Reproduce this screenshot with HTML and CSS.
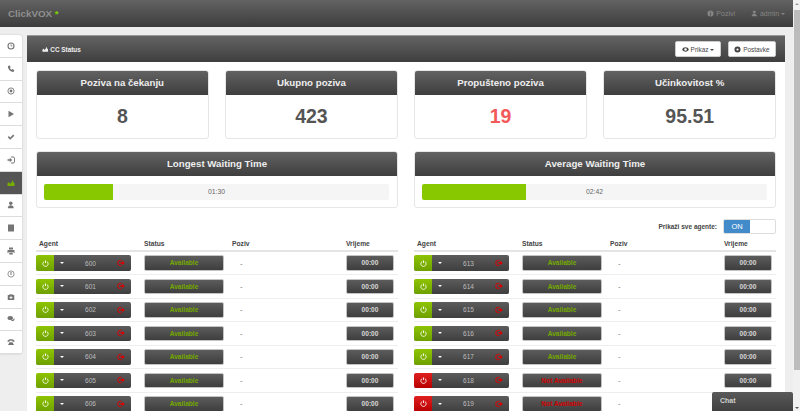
FILE: index.html
```html
<!DOCTYPE html>
<html>

<head>
    <title>ClickVOX - CC Status</title>
    <link rel="stylesheet" href="styles.css">
</head>

<body>
    <svg class="icon-defs" width="0" height="0">
        <symbol id="i-clock" viewBox="0 0 16 16"><circle cx="8" cy="8" r="6" fill="none" stroke="currentColor" stroke-width="2.2"/><path d="M8 4.500V8h3" fill="none" stroke="currentColor" stroke-width="1.500"/></symbol>
        <symbol id="i-phone" viewBox="0 0 16 16"><path d="M3 1.500l2.500-.5 2 3.500-1.800 1.500c.7 1.700 2 3 3.600 3.700l1.500-1.700 3.700 2-.5 2.500c-.3 1-1.500 1.500-2.500 1.300C6 12.800 2.700 8.800 1.800 4c-.2-1 .2-2.100 1.200-2.500z" fill="currentColor"/></symbol>
        <symbol id="i-target" viewBox="0 0 16 16"><circle cx="8" cy="8" r="6.200" fill="none" stroke="currentColor" stroke-width="1.800"/><circle cx="8" cy="8" r="2.800" fill="currentColor"/></symbol>
        <symbol id="i-play" viewBox="0 0 16 16"><path d="M3 1.500L14 8 3 14.500z" fill="currentColor"/></symbol>
        <symbol id="i-check" viewBox="0 0 16 16"><path d="M1.500 8.500l2.300-2.300 2.700 2.700 5.800-5.800 2.300 2.300-8.100 8.100z" fill="currentColor"/></symbol>
        <symbol id="i-login" viewBox="0 0 16 16"><path d="M8 2h4.500A2.500 2.500 0 0 1 15 4.500v7a2.500 2.500 0 0 1-2.500 2.500H8" fill="none" stroke="currentColor" stroke-width="2"/><path d="M1 6.500h4.500V3.500L10.500 8l-5 4.500v-3H1z" fill="currentColor"/></symbol>
        <symbol id="i-chart" viewBox="0 0 16 16"><path d="M1 14V9l3-3 2 4 3-3 2-5 2 5 2 1v6z" fill="currentColor"/></symbol>
        <symbol id="i-user" viewBox="0 0 16 16"><circle cx="7.500" cy="4.500" r="3.500" fill="currentColor"/><path d="M1.500 14.500c0-4 2.500-6 6-6s6 2 6 6z" fill="currentColor"/></symbol>
        <symbol id="i-book" viewBox="0 0 16 16"><path d="M2 1h12v14H2z" fill="currentColor"/></symbol>
        <symbol id="i-print" viewBox="0 0 16 16"><path d="M4 1h8v4H4zM1 6h14v6h-2V10H3v2H1zM4.500 11h7v4h-7z" fill="currentColor"/></symbol>
        <symbol id="i-gauge" viewBox="0 0 16 16"><circle cx="8" cy="8" r="6.200" fill="none" stroke="currentColor" stroke-width="1.500"/><path d="M7 4h2v6H7z" fill="currentColor"/></symbol>
        <symbol id="i-medkit" viewBox="0 0 16 16"><path d="M5 4V2h6v2h3.500v10h-13V4zm1.500 0h3V3h-3zM7 6.500V8.500H5v1.500h2v2h2v-2h2V8.500H9v-2z" fill="currentColor" fill-rule="evenodd"/></symbol>
        <symbol id="i-comments" viewBox="0 0 16 16"><ellipse cx="6.500" cy="6" rx="5.500" ry="4.200" fill="currentColor"/><path d="M10 12c3 .5 5-1 5-3.500 0-1-.5-1.800-1-2.300C13.500 9 11 10.500 7.500 11z" fill="currentColor"/></symbol>
        <symbol id="i-desk" viewBox="0 0 16 16"><path d="M1 6c1-5 13-5 14 0v1.500h-4V5.500H5v2H1zM5 8.500h6l3 5.500H2z" fill="currentColor"/></symbol>
        <symbol id="i-info" viewBox="0 0 16 16"><path d="M8 1a7 7 0 1 0 0 14A7 7 0 0 0 8 1zM7 3.500h2v2H7zM7 7h2v5.500H7z" fill="currentColor" fill-rule="evenodd"/></symbol>
        <symbol id="i-eye" viewBox="0 0 16 16"><path d="M8 3c3.500 0 6.500 2 7.500 5-1 3-4 5-7.500 5S1.500 11 .5 8C1.500 5 4.500 3 8 3zm0 2a3 3 0 1 0 0 6 3 3 0 0 0 0-6z" fill="currentColor" fill-rule="evenodd"/></symbol>
        <symbol id="i-gear" viewBox="0 0 16 16"><path d="M8 1a7 7 0 1 0 0 14A7 7 0 0 0 8 1zm0 4.500a2.500 2.500 0 1 1 0 5 2.500 2.500 0 0 1 0-5z" fill="currentColor" fill-rule="evenodd"/></symbol>
        <symbol id="i-power" viewBox="0 0 16 16"><path d="M5 3.400a6 6 0 1 0 6 0" fill="none" stroke="currentColor" stroke-width="2"/><path d="M8 1v6" stroke="currentColor" stroke-width="2"/></symbol>
        <symbol id="i-logout" viewBox="0 0 16 16"><path d="M9 2.500H7a5.500 5.500 0 0 0 0 11h2" fill="none" stroke="currentColor" stroke-width="2"/><path d="M6.500 6.500h4V3.500L15.500 8l-5 4.500v-3h-4z" fill="currentColor"/></symbol>
    </svg>

    <div class="viewport">
        <div class="page">
            <div class="topbar">
                <div class="logo">ClickVOX <span class="logo-star">*</span></div>
                <div class="topbar-right">
                    <span class="top-link"><svg class="ico"><use href="#i-info"/></svg> Pozivi</span>
                    <span class="top-link"><svg class="ico"><use href="#i-user"/></svg> admin <i class="caret"></i></span>
                </div>
            </div>

            <div class="layout">
                <div class="sidebar">
                    <div class="side-item"><svg class="ico"><use href="#i-clock"/></svg></div>
                    <div class="side-item"><svg class="ico"><use href="#i-phone"/></svg></div>
                    <div class="side-item"><svg class="ico"><use href="#i-target"/></svg></div>
                    <div class="side-item"><svg class="ico"><use href="#i-play"/></svg></div>
                    <div class="side-item"><svg class="ico"><use href="#i-check"/></svg></div>
                    <div class="side-item"><svg class="ico"><use href="#i-login"/></svg></div>
                    <div class="side-item active"><svg class="ico"><use href="#i-chart"/></svg></div>
                    <div class="side-item"><svg class="ico"><use href="#i-user"/></svg></div>
                    <div class="side-item"><svg class="ico"><use href="#i-book"/></svg></div>
                    <div class="side-item"><svg class="ico"><use href="#i-print"/></svg></div>
                    <div class="side-item"><svg class="ico"><use href="#i-gauge"/></svg></div>
                    <div class="side-item"><svg class="ico"><use href="#i-medkit"/></svg></div>
                    <div class="side-item"><svg class="ico"><use href="#i-comments"/></svg></div>
                    <div class="side-item"><svg class="ico"><use href="#i-desk"/></svg></div>
                </div>

                <div class="main">
                    <div class="main-head">
                        <div class="main-title"><svg class="ico"><use href="#i-chart"/></svg> CC Status</div>
                        <div class="main-actions">
                            <button class="white-btn btn-prikaz"><svg class="ico"><use href="#i-eye"/></svg> Prikaz <i class="caret"></i></button>
                            <button class="white-btn btn-postavke"><svg class="ico"><use href="#i-gear"/></svg> Postavke</button>
                        </div>
                    </div>

                    <div class="content">
                        <div class="stat-grid">
                            <div class="stat-card">
                                <div class="card-head">Poziva na čekanju</div>
                                <div class="stat-value">8</div>
                            </div>
                            <div class="stat-card">
                                <div class="card-head">Ukupno poziva</div>
                                <div class="stat-value">423</div>
                            </div>
                            <div class="stat-card">
                                <div class="card-head">Propušteno poziva</div>
                                <div class="stat-value missed">19</div>
                            </div>
                            <div class="stat-card">
                                <div class="card-head">Učinkovitost %</div>
                                <div class="stat-value">95.51</div>
                            </div>
                        </div>

                        <div class="wait-grid">
                            <div class="stat-card">
                                <div class="card-head">Longest Waiting Time</div>
                                <div class="wait-body">
                                    <div class="progress">
                                        <div class="progress-fill" style="width: 20%"></div>
                                        <div class="progress-label">01:30</div>
                                    </div>
                                </div>
                            </div>
                            <div class="stat-card">
                                <div class="card-head">Average Waiting Time</div>
                                <div class="wait-body">
                                    <div class="progress">
                                        <div class="progress-fill" style="width: 30%"></div>
                                        <div class="progress-label">02:42</div>
                                    </div>
                                </div>
                            </div>
                        </div>

                        <div class="toggle-row">
                            <span class="toggle-label">Prikaži sve agente:</span>
                            <div class="toggle"><span class="toggle-on">ON</span><span class="toggle-off"></span></div>
                        </div>

                        <div class="agent-grid">
                            <table class="agents">
                                <tr><th class="col-agent">Agent</th><th class="col-status">Status</th><th class="col-call">Poziv</th><th class="col-time">Vrijeme</th></tr>
                                <tr><td><div class="agent-btn"><span class="agent-power"><svg class="ico"><use href="#i-power"/></svg></span><span class="agent-body"><i class="caret"></i><span class="agent-num">600</span><svg class="ico logout"><use href="#i-logout"/></svg></span></div></td><td><div class="dark-btn status-ok">Available</div></td><td class="dash">-</td><td><div class="dark-btn time">00:00</div></td></tr>
                                <tr><td><div class="agent-btn"><span class="agent-power"><svg class="ico"><use href="#i-power"/></svg></span><span class="agent-body"><i class="caret"></i><span class="agent-num">601</span><svg class="ico logout"><use href="#i-logout"/></svg></span></div></td><td><div class="dark-btn status-ok">Available</div></td><td class="dash">-</td><td><div class="dark-btn time">00:00</div></td></tr>
                                <tr><td><div class="agent-btn"><span class="agent-power"><svg class="ico"><use href="#i-power"/></svg></span><span class="agent-body"><i class="caret"></i><span class="agent-num">602</span><svg class="ico logout"><use href="#i-logout"/></svg></span></div></td><td><div class="dark-btn status-ok">Available</div></td><td class="dash">-</td><td><div class="dark-btn time">00:00</div></td></tr>
                                <tr><td><div class="agent-btn"><span class="agent-power"><svg class="ico"><use href="#i-power"/></svg></span><span class="agent-body"><i class="caret"></i><span class="agent-num">603</span><svg class="ico logout"><use href="#i-logout"/></svg></span></div></td><td><div class="dark-btn status-ok">Available</div></td><td class="dash">-</td><td><div class="dark-btn time">00:00</div></td></tr>
                                <tr><td><div class="agent-btn"><span class="agent-power"><svg class="ico"><use href="#i-power"/></svg></span><span class="agent-body"><i class="caret"></i><span class="agent-num">604</span><svg class="ico logout"><use href="#i-logout"/></svg></span></div></td><td><div class="dark-btn status-ok">Available</div></td><td class="dash">-</td><td><div class="dark-btn time">00:00</div></td></tr>
                                <tr><td><div class="agent-btn"><span class="agent-power"><svg class="ico"><use href="#i-power"/></svg></span><span class="agent-body"><i class="caret"></i><span class="agent-num">605</span><svg class="ico logout"><use href="#i-logout"/></svg></span></div></td><td><div class="dark-btn status-ok">Available</div></td><td class="dash">-</td><td><div class="dark-btn time">00:00</div></td></tr>
                                <tr><td><div class="agent-btn"><span class="agent-power"><svg class="ico"><use href="#i-power"/></svg></span><span class="agent-body"><i class="caret"></i><span class="agent-num">606</span><svg class="ico logout"><use href="#i-logout"/></svg></span></div></td><td><div class="dark-btn status-ok">Available</div></td><td class="dash">-</td><td><div class="dark-btn time">00:00</div></td></tr>
                            </table>
                            <table class="agents">
                                <tr><th class="col-agent">Agent</th><th class="col-status">Status</th><th class="col-call">Poziv</th><th class="col-time">Vrijeme</th></tr>
                                <tr><td><div class="agent-btn"><span class="agent-power"><svg class="ico"><use href="#i-power"/></svg></span><span class="agent-body"><i class="caret"></i><span class="agent-num">613</span><svg class="ico logout"><use href="#i-logout"/></svg></span></div></td><td><div class="dark-btn status-ok">Available</div></td><td class="dash">-</td><td><div class="dark-btn time">00:00</div></td></tr>
                                <tr><td><div class="agent-btn"><span class="agent-power"><svg class="ico"><use href="#i-power"/></svg></span><span class="agent-body"><i class="caret"></i><span class="agent-num">614</span><svg class="ico logout"><use href="#i-logout"/></svg></span></div></td><td><div class="dark-btn status-ok">Available</div></td><td class="dash">-</td><td><div class="dark-btn time">00:00</div></td></tr>
                                <tr><td><div class="agent-btn"><span class="agent-power"><svg class="ico"><use href="#i-power"/></svg></span><span class="agent-body"><i class="caret"></i><span class="agent-num">615</span><svg class="ico logout"><use href="#i-logout"/></svg></span></div></td><td><div class="dark-btn status-ok">Available</div></td><td class="dash">-</td><td><div class="dark-btn time">00:00</div></td></tr>
                                <tr><td><div class="agent-btn"><span class="agent-power"><svg class="ico"><use href="#i-power"/></svg></span><span class="agent-body"><i class="caret"></i><span class="agent-num">616</span><svg class="ico logout"><use href="#i-logout"/></svg></span></div></td><td><div class="dark-btn status-ok">Available</div></td><td class="dash">-</td><td><div class="dark-btn time">00:00</div></td></tr>
                                <tr><td><div class="agent-btn"><span class="agent-power"><svg class="ico"><use href="#i-power"/></svg></span><span class="agent-body"><i class="caret"></i><span class="agent-num">617</span><svg class="ico logout"><use href="#i-logout"/></svg></span></div></td><td><div class="dark-btn status-ok">Available</div></td><td class="dash">-</td><td><div class="dark-btn time">00:00</div></td></tr>
                                <tr><td><div class="agent-btn off"><span class="agent-power"><svg class="ico"><use href="#i-power"/></svg></span><span class="agent-body"><i class="caret"></i><span class="agent-num">618</span><svg class="ico logout"><use href="#i-logout"/></svg></span></div></td><td><div class="dark-btn status-no">Not Available</div></td><td class="dash">-</td><td><div class="dark-btn time">00:00</div></td></tr>
                                <tr><td><div class="agent-btn off"><span class="agent-power"><svg class="ico"><use href="#i-power"/></svg></span><span class="agent-body"><i class="caret"></i><span class="agent-num">619</span><svg class="ico logout"><use href="#i-logout"/></svg></span></div></td><td><div class="dark-btn status-no">Not Available</div></td><td class="dash">-</td><td><div class="dark-btn time">00:00</div></td></tr>
                            </table>
                        </div>
                    </div>
                </div>
            </div>

            <div class="chat-tab">Chat</div>
        </div>

        <div class="scrollbar">
            <div class="scroll-arrow up"></div>
            <div class="scroll-track"><div class="scroll-thumb"></div></div>
            <div class="scroll-arrow down"></div>
        </div>
    </div>
</body>

</html>
```

FILE: styles.css
```css
/* page frame */

html, body {
    margin: 0;
    padding: 0;
    height: 411px;
    overflow: hidden;
}

body {
    font-family: "Liberation Sans", Arial, sans-serif;
    font-size: 8px;
    color: #555555;
    background-color: #eeeeee;
}

.icon-defs {
    display: block;
    height: 0;
}

.viewport {
    display: flex;
    height: 411px;
}

.page {
    position: relative;
    width: 793px;
    height: 411px;
    overflow: hidden;
}

.ico {
    width: 7px;
    height: 7px;
    vertical-align: -1px;
}

.caret {
    display: inline-block;
    width: 0;
    height: 0;
    border-left: 2.5px solid transparent;
    border-right: 2.5px solid transparent;
    border-top: 2.5px solid currentColor;
    vertical-align: middle;
}

/* top bar */

.topbar {
    height: 27px;
    padding: 0 8px;
    display: flex;
    justify-content: space-between;
    align-items: center;
    background: linear-gradient(#636363, #3c3c3c);
}

.logo {
    font-size: 9.8px;
    font-weight: bold;
    color: #8f8f8f;
}

.logo-star {
    color: #7fd000;
}

.topbar-right {
    display: flex;
    gap: 16px;
    color: #858585;
    font-size: 7px;
}

/* sidebar and main */

.layout {
    display: flex;
    gap: 5px;
    padding-top: 8px;
}

.sidebar {
    width: 22px;
    height: 319px;
    flex-shrink: 0;
    background-color: #ffffff;
    border-radius: 0 3px 3px 0;
    box-shadow: 0 0 2px rgba(0, 0, 0, 0.2);
}

.side-item {
    height: 22.8px;
    box-sizing: border-box;
    display: flex;
    align-items: center;
    justify-content: center;
    border-bottom: 1px solid #dddddd;
    color: #757575;
}

.side-item .ico {
    width: 8px;
    height: 8px;
}

.side-item.active {
    background-color: #555555;
    color: #76ad00;
}

.main {
    width: 758px;
    background-color: #ffffff;
}

.main-head {
    height: 27px;
    box-sizing: border-box;
    padding: 0 9px 0 15px;
    display: flex;
    justify-content: space-between;
    align-items: center;
    background: linear-gradient(#646464, #3e3e3e);
    border-top: 1px solid #999999;
}

.main-title {
    font-size: 6.4px;
    font-weight: bold;
    color: #eeeeee;
}

.main-title .ico {
    width: 6.5px;
    height: 6.5px;
    vertical-align: -0.5px;
}

.main-actions {
    display: flex;
    gap: 7px;
}

.white-btn {
    height: 16px;
    padding: 0;
    font-family: inherit;
    font-size: 6.4px;
    color: #444444;
    background-color: #ffffff;
    border: 1px solid #cccccc;
    border-radius: 2px;
}

.btn-prikaz {
    width: 46px;
}

.btn-postavke {
    width: 48px;
}

.content {
    padding: 8px 9px;
}

/* stat cards */

.stat-grid {
    display: grid;
    grid-template-columns: repeat(4, 1fr);
    gap: 16.5px;
}

.wait-grid {
    display: grid;
    grid-template-columns: 1fr 1fr;
    gap: 16px;
    margin-top: 12px;
}

.stat-card {
    background-color: #ffffff;
    border: 1px solid #e6e6e6;
    border-radius: 3px;
    box-sizing: border-box;
    overflow: hidden;
}

.card-head {
    height: 24px;
    line-height: 24px;
    text-align: center;
    font-size: 9.7px;
    font-weight: bold;
    color: #eeeeee;
    background: linear-gradient(#626262, #3e3e3e);
}

.stat-value {
    height: 43px;
    line-height: 43px;
    text-align: center;
    font-size: 19.5px;
    font-weight: bold;
    color: #555555;
}

.stat-value.missed {
    color: #f25a5a;
}

.wait-body {
    padding: 8px 8px 7px 7px;
}

.progress {
    height: 16px;
    display: grid;
    background-color: #f5f5f5;
    border-radius: 2px;
    overflow: hidden;
}

.progress-fill,
.progress-label {
    grid-area: 1 / 1;
}

.progress-fill {
    background-color: #88c800;
}

.progress-label {
    line-height: 16px;
    text-align: center;
    font-size: 6.8px;
    color: #666666;
}

/* toggle */

.toggle-row {
    display: flex;
    justify-content: flex-end;
    align-items: center;
    gap: 6px;
    margin-top: 11px;
}

.toggle-label {
    font-size: 6.5px;
    font-weight: bold;
    color: #444444;
}

.toggle {
    width: 53px;
    height: 15px;
    display: flex;
    box-sizing: border-box;
    border: 1px solid #dddddd;
    border-radius: 2px;
    overflow: hidden;
}

.toggle-on {
    width: 26px;
    line-height: 13px;
    text-align: center;
    font-size: 7.5px;
    color: #ffffff;
    background-color: #428bca;
}

/* agent tables */

.agent-grid {
    display: grid;
    grid-template-columns: 1fr 1fr;
    gap: 16px;
    margin-top: 2px;
}

.agents {
    width: 362px;
    table-layout: fixed;
    border-collapse: collapse;
}

.agents th {
    height: 14px;
    padding: 0;
    text-align: left;
    font-size: 6.7px;
    color: #444444;
    border-bottom: 2px solid #e4e4e4;
}

.agents td {
    height: 23.5px;
    padding: 0;
    box-sizing: border-box;
    border-bottom: 1px solid #eeeeee;
}

.col-agent {
    width: 108px;
    text-indent: 3px;
}

.col-status {
    width: 88px;
}

.col-call {
    width: 114px;
}

.col-time {
    width: 52px;
}

.dash {
    text-indent: 8px;
    color: #777777;
}

.agent-btn {
    width: 95px;
    height: 15.5px;
    display: flex;
    box-sizing: border-box;
    border-radius: 2px;
    overflow: hidden;
    color: #ffffff;
    box-shadow: inset 0 -1px 0 #999999;
}

.agent-power {
    width: 18px;
    display: flex;
    align-items: center;
    justify-content: center;
    background: linear-gradient(#8ec400, #6ea000);
}

.agent-btn.off .agent-power {
    background: linear-gradient(#e02020, #b80000);
}

.agent-body {
    flex: 1;
    display: flex;
    align-items: center;
    padding: 0 6px;
    background: linear-gradient(#5c5c5c, #3e3e3e);
}

.agent-num {
    flex: 1;
    text-align: center;
    font-size: 6.5px;
    color: #bdbdbd;
}

.logout {
    width: 8px;
    height: 8px;
    color: #dd0000;
}

.dark-btn {
    height: 15.5px;
    box-sizing: border-box;
    line-height: 13.5px;
    text-align: center;
    font-size: 6.6px;
    font-weight: bold;
    border: 1px solid #c4c4c4;
    border-radius: 2px;
    background: linear-gradient(#5c5c5c, #3e3e3e);
}

.status-ok,
.status-no {
    width: 80px;
}

.status-ok {
    color: #74a800;
}

.status-no {
    color: #cc0000;
}

.time {
    width: 48px;
    color: #d8d8d8;
}

/* chat tab */

.chat-tab {
    position: absolute;
    right: 0;
    bottom: 0;
    width: 73px;
    height: 19px;
    padding-left: 8px;
    line-height: 18px;
    font-size: 7px;
    font-weight: bold;
    color: #d0d0d0;
    background: linear-gradient(#5a5a5a, #404040);
    border-radius: 2px 2px 0 0;
}

/* scrollbar */

.scrollbar {
    width: 7px;
    display: flex;
    flex-direction: column;
    background-color: #f1f1f1;
}

.scroll-arrow {
    height: 7px;
    display: flex;
    align-items: center;
    justify-content: center;
}

.scroll-arrow.up::after,
.scroll-arrow.down::after {
    content: "";
    border-left: 2px solid transparent;
    border-right: 2px solid transparent;
}

.scroll-arrow.up::after {
    border-bottom: 2px solid #999999;
}

.scroll-arrow.down::after {
    border-top: 2px solid #555555;
}

.scroll-track {
    flex: 1;
}

.scroll-thumb {
    height: 360px;
    margin: 3px 0 0 1px;
    background-color: #bcbcbc;
}
```
